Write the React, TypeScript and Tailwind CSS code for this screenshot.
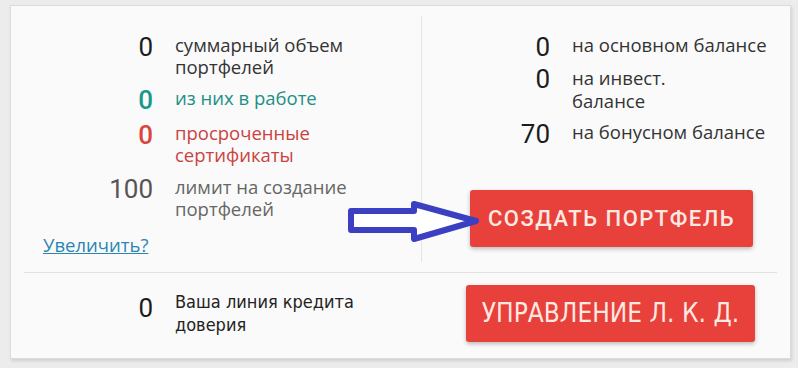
const num = "font-['Roboto',sans-serif] text-[26px] leading-[26px] text-right";
const lbl = "font-['Open_Sans',sans-serif] text-[18.5px] leading-[22px]";
const narrow = "font-['Liberation_Sans_Narrow','DejaVu_Sans_Condensed',sans-serif]";

function Row({
  value,
  label,
  numClass,
  lblClass,
  className = "",
}: {
  value: string;
  label: React.ReactNode;
  numClass: string;
  lblClass: string;
  className?: string;
}) {
  return (
    <div className={`flex items-start gap-[22px] ${className}`}>
      <div className={`w-[64px] shrink-0 ${num} ${numClass}`}>{value}</div>
      <div className={`${lbl} ${lblClass}`}>{label}</div>
    </div>
  );
}

export default function App() {
  return (
    <div className="relative h-[368px] w-[798px] overflow-hidden bg-[#ececec] pl-[10px] pt-[5px]">
      <div className="flex h-[354px] w-[781px] flex-col border border-[#dcdcdc] bg-[#fafafa] shadow-[1px_2px_3px_rgba(0,0,0,0.12)]">
        {/* верхняя часть */}
        <div className="flex h-[266px]">
          <div className="w-[410px] pl-[32px] pt-[28px]">
            <div className="pl-[46px]">
              <Row
                value="0"
                label={<>суммарный объем<br />портфелей</>}
                numClass="text-[#1c1c1c]"
                lblClass="text-[#333]"
              />
              <Row
                value="0"
                label="из них в работе"
                numClass="text-[#17998a] font-medium"
                lblClass="text-[#1d8f86]"
                className="mt-[9px]"
              />
              <Row
                value="0"
                label={<>просроченные<br />сертификаты</>}
                numClass="text-[#d9463b] font-medium"
                lblClass="text-[#c9433f]"
                className="mt-[9px]"
              />
              <Row
                value="100"
                label={<>лимит на создание<br />портфелей</>}
                numClass="text-[#555]"
                lblClass="text-[#666]"
                className="mt-[10px]"
              />
            </div>
            <a
              href="#"
              className="mt-[14px] block w-fit font-['Open_Sans',sans-serif] text-[18.5px] leading-[22px] text-[#2b86b3] underline"
            >
              Увеличить?
            </a>
          </div>

          <div className="my-[10px] w-px bg-[#e4e4e4]" />

          <div className="flex flex-1 flex-col pl-[64px] pt-[28px]">
            <Row value="0" label="на основном балансе" numClass="text-[#1c1c1c]" lblClass="text-[#333]" />
            <Row
              value="0"
              label={<>на инвест.<br />балансе</>}
              numClass="text-[#1c1c1c]"
              lblClass="text-[#333] leading-[23px]"
              className="mt-[6px]"
            />
            <Row
              value="70"
              label="на бонусном балансе"
              numClass="text-[#1c1c1c]"
              lblClass="text-[#333]"
              className="mt-[9px]"
            />
            <button
              type="button"
              className="ml-[-16px] mt-[43px] h-[57px] w-[283px] rounded-[3px] bg-[#e8403a] font-['Roboto',sans-serif] text-[22px] font-medium tracking-[1.5px] text-[#ffe9e2] shadow-[0_2px_4px_rgba(0,0,0,0.25)]"
            >
              СОЗДАТЬ ПОРТФЕЛЬ
            </button>
          </div>
        </div>

        <div className="mx-[13px] h-px bg-[#e2e2e2]" />

        {/* нижняя часть */}
        <div className="flex items-start pt-[12px]">
          <div className="flex w-[455px] items-start gap-[22px] pl-[78px] pt-[5px]">
            <div className={`w-[64px] shrink-0 ${num} mt-[5px] text-[#1c1c1c]`}>0</div>
            <div className={`${narrow} text-[18px] leading-[23px] text-[#222]`}>
              Ваша линия кредита
              <br />
              доверия
            </div>
          </div>
          <button
            type="button"
            className={`${narrow} h-[57px] w-[289px] rounded-[3px] bg-[#e8403a] text-[26px] text-[#ffe9e2] shadow-[0_2px_4px_rgba(0,0,0,0.25)]`}
          >
            УПРАВЛЕНИЕ Л. К. Д.
          </button>
        </div>
      </div>

      {/* стрелка */}
      <svg className="absolute left-0 top-0" width="798" height="368" viewBox="0 0 798 368">
        <path
          d="M351 211 L414 211 L414 204 L476 221 L414 239 L414 230 L351 230 Z"
          fill="#ffffff"
          stroke="#3b3fc2"
          strokeWidth="6"
          strokeLinejoin="round"
        />
      </svg>
    </div>
  );
}
